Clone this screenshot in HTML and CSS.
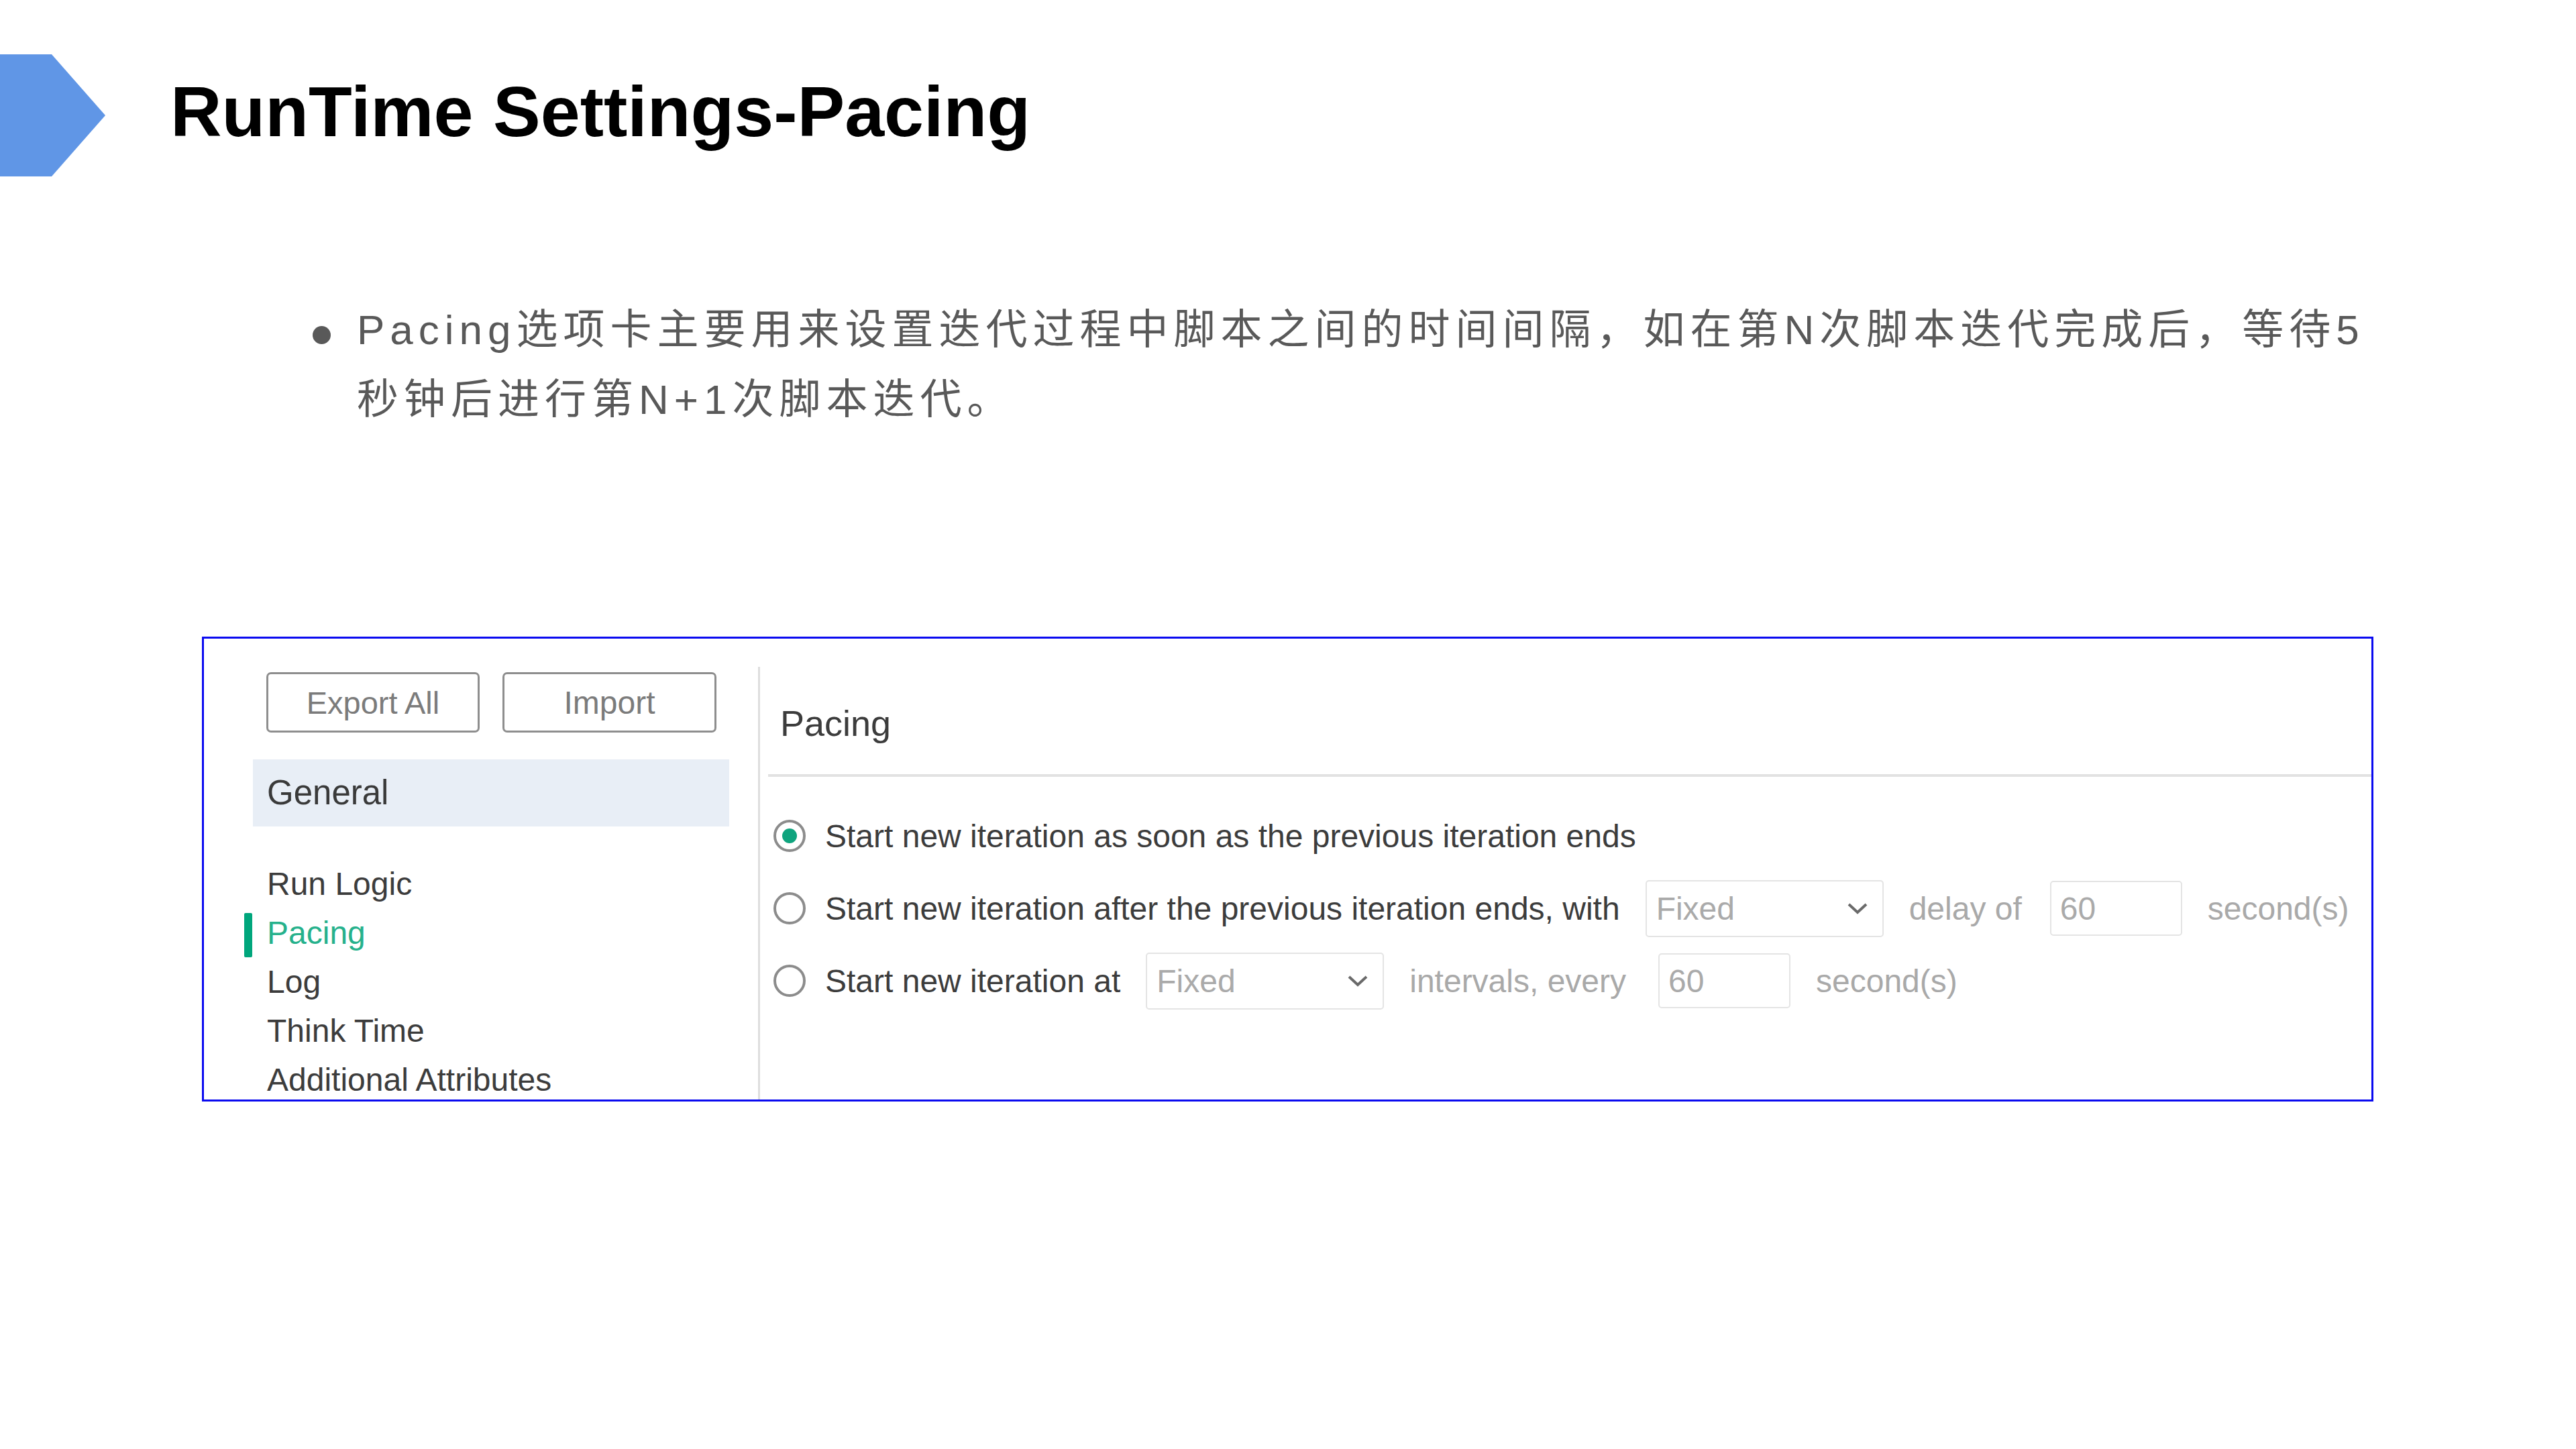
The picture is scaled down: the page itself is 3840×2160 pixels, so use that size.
FILE: index.html
```html
<!DOCTYPE html>
<html lang="zh-CN">
<head>
<meta charset="utf-8">
<title>RunTime Settings-Pacing</title>
<link rel="stylesheet" href="styles.css">
</head>
<body>
<div class="slide">
  <header class="slide-head">
    <svg class="chevron" width="157" height="182" viewBox="0 0 157 182" aria-hidden="true"><polygon points="0,0 77,0 157,91 77,182 0,182" fill="#6096e6"/></svg>
    <h1 class="title">RunTime Settings-Pacing</h1>
  </header>

  <div class="bullet">
    <span class="dot"></span>
    <p class="bullet-text">Pacing选项卡主要用来设置迭代过程中脚本之间的时间间隔，如在第N次脚本迭代完成后，等待5<br>秒钟后进行第N+1次脚本迭代。</p>
  </div>

  <div class="shot">
    <aside class="side">
      <div class="btns">
        <div class="btn">Export All</div>
        <div class="btn btn-import">Import</div>
      </div>
      <div class="group">General</div>
      <ul class="nav">
        <li>Run Logic</li>
        <li class="active">Pacing</li>
        <li>Log</li>
        <li>Think Time</li>
        <li>Additional Attributes</li>
      </ul>
    </aside>
    <section class="pane">
      <div class="pane-head">Pacing</div>
      <div class="opts">
        <div class="opt">
          <span class="radio checked"></span>
          <span class="lbl">Start new iteration as soon as the previous iteration ends</span>
        </div>
        <div class="opt">
          <span class="radio"></span>
          <span class="lbl">Start new iteration after the previous iteration ends, with</span>
          <span class="select"><span>Fixed</span><svg width="32" height="18" viewBox="0 0 32 18" aria-hidden="true"><polyline points="3,3 16,15 29,3" fill="none" stroke="#6a6a6a" stroke-width="4"/></svg></span>
          <span class="muted">delay of</span>
          <span class="field">60</span>
          <span class="muted">second(s)</span>
        </div>
        <div class="opt">
          <span class="radio"></span>
          <span class="lbl">Start new iteration at</span>
          <span class="select"><span>Fixed</span><svg width="32" height="18" viewBox="0 0 32 18" aria-hidden="true"><polyline points="3,3 16,15 29,3" fill="none" stroke="#6a6a6a" stroke-width="4"/></svg></span>
          <span class="muted">intervals, every</span>
          <span class="field field-wide">60</span>
          <span class="muted">second(s)</span>
        </div>
      </div>
    </section>
  </div>
</div>
</body>
</html>
```

FILE: styles.css
```css
html, body {
  margin: 0;
  padding: 0;
  background: #ffffff;
}

body {
  width: 3840px;
  height: 2160px;
  overflow: hidden;
  font-family: "Liberation Sans", Arial, "Noto Sans CJK SC", sans-serif;
}

.slide-head {
  display: flex;
  align-items: flex-start;
  padding-top: 81px;
  height: 182px;
}

.chevron {
  display: block;
  flex: none;
}

.title {
  margin: 25px 0 0 97px;
  font-size: 106px;
  line-height: 120px;
  font-weight: 700;
  color: #000000;
}

.bullet {
  display: flex;
  align-items: flex-start;
  margin-top: 177px;
  padding-left: 466px;
  color: #595959;
}

.dot {
  flex: none;
  width: 27px;
  height: 27px;
  border-radius: 50%;
  background: #595959;
  margin-top: 46px;
  margin-right: 39px;
}

.bullet-text {
  margin: 0;
  font-family: "Liberation Sans", "Noto Sans CJK SC", sans-serif;
  font-size: 62px;
  line-height: 104px;
  letter-spacing: 8px;
  white-space: nowrap;
}

.shot {
  display: flex;
  margin: 301px 0 0 301px;
  width: 3231px;
  height: 687px;
  border: 3px solid #0a0af0;
  overflow: hidden;
  font-size: 48px;
  color: #3c3c3c;
}

/* left column */
.side {
  flex: none;
  width: 710px;
  padding: 50px 43px 0 73px;
}

.btns {
  display: flex;
  gap: 34px;
  margin-left: 20px;
}

.btn {
  box-sizing: border-box;
  width: 318px;
  height: 90px;
  border: 3px solid #8e8e8e;
  border-radius: 7px;
  display: flex;
  align-items: center;
  justify-content: center;
  font-size: 47px;
  color: #7b7b7b;
}

.btn-import {
  width: 319px;
  font-size: 48px;
}

.group {
  margin-top: 40px;
  height: 100px;
  background: #e8eef6;
  padding-left: 21px;
  font-size: 51px;
  line-height: 100px;
  color: #3a3a3a;
}

.nav {
  list-style: none;
  margin: 49px 0 0;
  padding: 0 0 0 21px;
  font-size: 48px;
  line-height: 73px;
  color: #3c3c3c;
  white-space: nowrap;
}

.nav li {
  position: relative;
}

.nav .active {
  color: #26b18c;
}

.nav .active::before {
  content: "";
  position: absolute;
  left: -34px;
  top: 7px;
  width: 12px;
  height: 66px;
  border-radius: 2px;
  background: #00a67c;
}

/* right pane */
.pane {
  flex: 1;
  margin-top: 42px;
  border-left: 3px solid #dedede;
}

.pane-head {
  margin-left: 12px;
  padding: 53px 0 45px 18px;
  font-size: 54px;
  line-height: 62px;
  color: #3c3c3c;
  border-bottom: 4px solid #e2e2e2;
}

.opts {
  padding: 34px 0 0 20px;
}

.opt {
  display: flex;
  align-items: center;
  gap: 38px;
  height: 108px;
  white-space: nowrap;
}

.radio {
  flex: none;
  box-sizing: border-box;
  width: 48px;
  height: 48px;
  border: 4px solid #8c8c8c;
  border-radius: 50%;
  margin-right: -9px;
  display: flex;
  align-items: center;
  justify-content: center;
}

.radio.checked::after {
  content: "";
  width: 22px;
  height: 22px;
  border-radius: 50%;
  background: #0fa47e;
}

.lbl {
  color: #3c3c3c;
}

.select {
  flex: none;
  box-sizing: border-box;
  width: 355px;
  height: 85px;
  border: 2px solid #e4e4e4;
  border-radius: 5px;
  padding: 0 21px 0 14px;
  display: flex;
  align-items: center;
  justify-content: space-between;
  color: #aaaaaa;
}

.select svg {
  display: block;
}

.field {
  flex: none;
  box-sizing: border-box;
  width: 197px;
  height: 82px;
  margin-left: 4px;
  border: 2px solid #e4e4e4;
  border-radius: 5px;
  padding-left: 13px;
  display: flex;
  align-items: center;
  color: #aaaaaa;
}

.field-wide {
  margin-left: 10px;
}

.muted {
  color: #a9a9a9;
}
```
